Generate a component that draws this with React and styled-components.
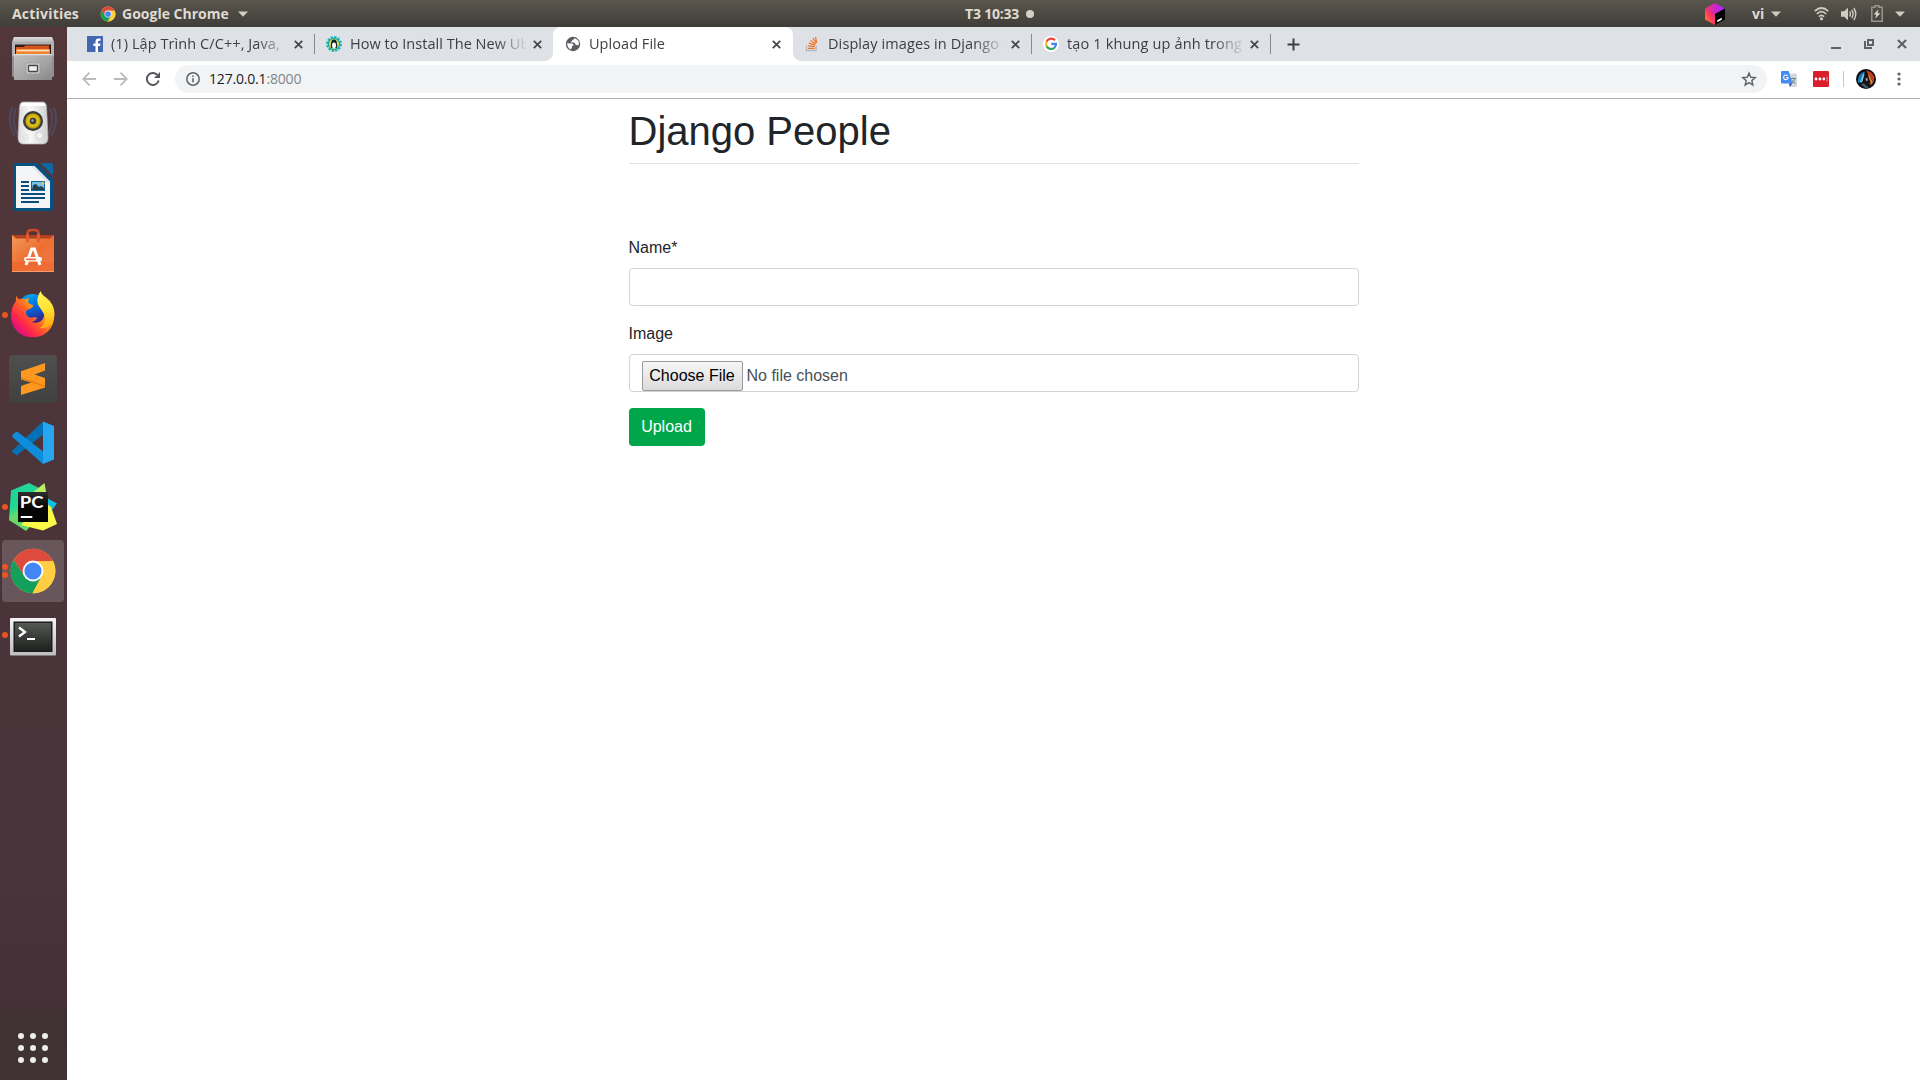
import React from "react";
import styled, { createGlobalStyle } from "styled-components";

const Global = createGlobalStyle`
  *, *::before, *::after { box-sizing: border-box; }
  body { margin: 0; background: #fff; overflow: hidden; }
  svg { display: block; flex: none; }
`;

const uiFont = `"Open Sans", "Noto Sans", sans-serif`;
const pageFont = `"Liberation Sans", Arial, sans-serif`;

const Desktop = styled.div`
  width: 1920px;
  height: 1080px;
  display: flex;
  flex-direction: column;
  overflow: hidden;
  font-family: ${uiFont};
`;

/* ---------- top panel ---------- */
const TopBar = styled.header`
  height: 27px;
  flex: none;
  display: grid;
  grid-template-columns: 965px auto 1fr;
  align-items: center;
  background: linear-gradient(#5a564e, #3f3d38);
  color: #dfdbd2;
  font-size: 14px;
  font-weight: 700;
  line-height: 26px;
`;
const BarLeft = styled.div`
  display: flex;
  align-items: center;
  padding-left: 12px;
`;
const BarCenter = styled.div`
  display: flex;
  align-items: center;
  gap: 4px;
`;
const BarRight = styled.div`
  display: flex;
  align-items: center;
  justify-content: flex-end;
  padding-right: 15px;
`;
const BarText = styled.span`
  width: ${(p) => p.$w}px;
  margin-right: ${(p) => p.$gap || 0}px;
  letter-spacing: ${(p) => p.$ls || 0}px;
  white-space: nowrap;
`;
const Dot = styled.span`
  width: 8px;
  height: 8px;
  border-radius: 50%;
  background: #d3d0c8;
`;
const Spacer = styled.span`
  flex: none;
  width: ${(p) => p.$w}px;
`;

/* ---------- dock ---------- */
const Body = styled.div`
  flex: 1;
  display: flex;
  min-height: 0;
`;
const Dock = styled.nav`
  width: 67px;
  flex: none;
  display: flex;
  flex-direction: column;
  background: linear-gradient(#523639 0%, #4f363a 25%, #4a343a 50%, #48343a 80%, #443036 93%, #3e3233 94%, #3f3334 100%);
`;
const DockItem = styled.div`
  height: 62px;
  width: 62px;
  margin: 1px 0 1px 2px;
  display: flex;
  align-items: center;
  border-radius: 4px;
  background: ${(p) => (p.$active ? "rgba(255,255,255,0.17)" : "transparent")};
`;
const Marks = styled.div`
  width: 7px;
  display: flex;
  flex-direction: column;
  gap: 2px;
`;
const Mark = styled.span`
  width: 6px;
  height: 6px;
  border-radius: 50%;
  background: #e95420;
`;
const AppsButton = styled.div`
  margin: auto 0 17px 18px;
  display: grid;
  grid-template-columns: repeat(3, 6px);
  gap: 6px;
`;
const AppsDot = styled.span`
  height: 6px;
  border-radius: 50%;
  background: #eeeeec;
`;

/* ---------- browser ---------- */
const Browser = styled.main`
  flex: 1;
  min-width: 0;
  display: flex;
  flex-direction: column;
  background: #fff;
`;
const TabStrip = styled.div`
  height: 34px;
  flex: none;
  display: flex;
  padding-left: 8px;
  background: #dee1e6;
`;
const Tab = styled.div`
  position: relative;
  width: ${(p) => (p.$active ? 240 : 239)}px;
  margin-right: ${(p) => (p.$active ? -1 : 0)}px;
  height: 34px;
  display: flex;
  align-items: center;
  padding: 0 0 0 12px;
  border-radius: 8px 8px 0 0;
  background: ${(p) => (p.$active ? "#fff" : "transparent")};
  &::before,
  &::after {
    content: "";
    display: ${(p) => (p.$active ? "block" : "none")};
    position: absolute;
    bottom: 0;
    width: 8px;
    height: 8px;
  }
  &::before {
    left: -8px;
    background: radial-gradient(circle at 0 0, transparent 7.5px, #fff 8.2px);
  }
  &::after {
    right: -8px;
    background: radial-gradient(circle at 100% 0, transparent 7.5px, #fff 8.2px);
  }
`;
const Title = styled.span`
  flex: none;
  width: 176px;
  margin: 0 7px 0 8px;
  white-space: nowrap;
  font-size: 14.5px;
  letter-spacing: ${(p) => p.$ls || 0}px;
  line-height: 34px;
  color: #3c4043;
  -webkit-mask-image: linear-gradient(90deg, #000 146px, transparent 178px);
  mask-image: linear-gradient(90deg, #000 146px, transparent 178px);
`;
const Divider = styled.span`
  width: 1px;
  height: 20px;
  margin: 7px -1px 0 0;
  background: #868b90;
`;
const NewTab = styled.div`
  display: flex;
  align-items: center;
  margin-left: 17px;
`;
const WindowControls = styled.div`
  margin-left: auto;
  padding-right: 13px;
  display: flex;
  align-items: center;
  gap: 23px;
`;
const Toolbar = styled.div`
  height: 38px;
  flex: none;
  display: flex;
  align-items: center;
  padding: 0 14px 2px 12px;
  border-bottom: 1px solid #b3b3b4;
  background: #fff;
`;
const NavButton = styled.div`
  width: 20px;
  margin-right: 12px;
  display: flex;
  justify-content: center;
`;
const Omnibox = styled.div`
  width: 1592px;
  height: 28px;
  border-radius: 14px;
  background: #f1f3f4;
  display: flex;
  align-items: center;
  padding: 0 10px;
`;
const Url = styled.span`
  flex: 1;
  margin-left: 8px;
  font-size: 14px;
  letter-spacing: -0.18px;
  line-height: 28px;
  color: #202124;
`;
const Port = styled.span`
  color: #80868b;
`;
const Extensions = styled.div`
  flex: 1;
  display: flex;
  align-items: center;
  padding-left: 14px;
`;
const ExtDivider = styled.span`
  width: 1px;
  height: 16px;
  margin: 0 12px 0 14px;
  background: #c5c8cc;
`;

/* ---------- page ---------- */
const Page = styled.section`
  flex: 1;
  padding: 8px 0 0;
  font-family: ${pageFont};
  font-size: 16px;
  line-height: 24px;
  color: #212529;
`;
const Container = styled.div`
  width: 730px;
  margin: 0 auto;
`;
const Heading = styled.h1`
  margin: 0 0 72px;
  padding-bottom: 8px;
  border-bottom: 1px solid #e1e3e6;
  font-size: 40px;
  font-weight: 400;
  line-height: 48px;
`;
const Group = styled.div`
  margin-bottom: 16px;
`;
const Label = styled.label`
  display: block;
  margin-bottom: 8px;
`;
const Control = styled.div`
  height: 38px;
  display: flex;
  align-items: flex-start;
  padding: 6px 12px;
  border: 1px solid #ced4da;
  border-radius: 4px;
  color: #495057;
`;
const ChooseButton = styled.span`
  width: 101px;
  height: 30px;
  flex: none;
  margin-right: 4px;
  border: 1px solid #9a9a9a;
  border-radius: 2px;
  background: linear-gradient(#f6f6f6, #dcdcdc);
  color: #000;
  line-height: 28px;
  text-align: center;
`;
const FileText = styled.span`
  line-height: 30px;
`;
const UploadButton = styled.button`
  display: block;
  width: 76px;
  height: 38px;
  padding: 0;
  border: 0;
  border-radius: 4px;
  background: #00a74a;
  color: #fff;
  font: 16px/38px ${pageFont};
  text-align: center;
`;

/* ---------- shared drawings ---------- */
const ChromeLogo = ({ size }) => (
  <svg width={size} height={size} viewBox="0 0 48 48">
    <circle cx="24" cy="24" r="22.3" fill="#fcc934" />
    <path d="M4.7 12.9A22.3 22.3 0 0 1 43.3 12.9L42.8 14H24L15 29Z" fill="#dd4b3e" />
    <path d="M4.7 12.9A22.3 22.3 0 0 0 23.5 46.3L32.7 29 15.3 29Z" fill="#12a05c" />
    <path d="M23.5 46.3A22.3 22.3 0 0 0 44.1 14H24L32.7 29Z" fill="#ffce43" />
    <circle cx="24" cy="24" r="10.4" fill="#fff" />
    <circle cx="24" cy="24" r="8.6" fill="#4286f5" />
  </svg>
);
const Caret = () => (
  <svg width="10" height="6" viewBox="0 0 10 6"><path d="M0 .5h10L5 5.7Z" fill="#cfccc4" /></svg>
);
const Cross = ({ color = "#45494d", size = 9, w = 1.8 }) => (
  <svg width={size} height={size} viewBox="0 0 9 9">
    <path d="M.8.8l7.4 7.4M8.2.8L.8 8.2" stroke={color} strokeWidth={w} />
  </svg>
);

/* ---------- status icons ---------- */
const CubeIcon = () => (
  <svg width="20" height="22" viewBox="0 0 20 22">
    <defs>
      <linearGradient id="cubeL" x1="1" y1="0" x2="0" y2="1">
        <stop offset="0" stopColor="#e0229b" /><stop offset=".5" stopColor="#ff3a5c" /><stop offset="1" stopColor="#ff9419" />
      </linearGradient>
      <linearGradient id="cubeT" x1="0" y1="0" x2="1" y2="0">
        <stop offset="0" stopColor="#ff3366" /><stop offset=".6" stopColor="#c625d8" /><stop offset="1" stopColor="#9b2cff" />
      </linearGradient>
    </defs>
    <path d="M0 5.5L10 0l10 5.5L10 11Z" fill="url(#cubeT)" />
    <path d="M0 5.5L10 11v11L0 16.5Z" fill="url(#cubeL)" />
    <path d="M10 11l10-5.5v11L10 22Z" fill="#000" />
    <path d="M12.2 17.2l4.6-2.5v2l-4.6 2.5Z" fill="#fff" />
  </svg>
);
const WifiIcon = () => (
  <svg width="15" height="15" viewBox="0 0 15 15" fill="none" stroke="#cfccc4" strokeWidth="1.7">
    <path d="M.8 5.2Q7.5-1.2 14.2 5.2" />
    <path d="M2.8 8Q7.5 3.4 12.2 8" />
    <path d="M4.9 10.6Q7.5 8 10.1 10.6" />
    <circle cx="7.5" cy="12.8" r="1.6" fill="#cfccc4" stroke="none" />
  </svg>
);
const VolumeIcon = () => (
  <svg width="16" height="14" viewBox="0 0 16 14">
    <path d="M0 4.3h3.2L7 .8v12.4L3.2 9.7H0Z" fill="#cfccc4" />
    <path d="M8.6 4.5q1.6 2.5 0 5M10.7 2.8q2.8 4.2 0 8.4M12.8 1q4 6 0 12" fill="none" stroke="#cfccc4" strokeWidth="1.4" />
  </svg>
);
const BatteryIcon = () => (
  <svg width="12" height="17" viewBox="0 0 12 17">
    <path d="M4 0.800h4v1.500h3.200v13.900H.8V2.300H4Z" fill="none" stroke="#98958d" strokeWidth="1.500" />
    <path d="M7.600 4.200L2.600 9.600h2.600l-1 4.200 5.200-5.600H6.700Z" fill="#dad7cf" />
  </svg>
);

/* ---------- dock icons ---------- */
const Box = ({ children }) => <svg width="48" height="48" viewBox="0 0 48 48">{children}</svg>;

const FilesIcon = () => (
  <Box>
    <defs>
      <linearGradient id="fil" x1="0" y1="0" x2="1" y2="1">
        <stop offset="0" stopColor="#c2c2c2" /><stop offset=".6" stopColor="#a3a3a3" /><stop offset="1" stopColor="#868686" />
      </linearGradient>
      <linearGradient id="filT" x1="0" y1="0" x2="0" y2="1">
        <stop offset="0" stopColor="#dcdcdc" /><stop offset="1" stopColor="#b8b8b8" />
      </linearGradient>
    </defs>
    <path d="M5 2h38l2 5v34l-1 1H4l-1-1V7Z" fill="#8f8f8f" />
    <path d="M5 2h38l2 5.500H3Z" fill="url(#filT)" />
    <path d="M3 7.500h42v14H3Z" fill="#b4b4b4" />
    <path d="M6 9.500h36V21H6Z" fill="#2f1d1a" />
    <path d="M7 12h8l1-1.500h24V20H7Z" fill="#d5561b" />
    <path d="M7 14h34v6H7Z" fill="#f08533" />
    <path d="M8 14.800h32v1.500H8Z" fill="#ffe3c4" />
    <path d="M5 19h38v26H5Z" fill="url(#fil)" />
    <path d="M5 19h38v1.200H5Z" fill="#e0e0e0" />
    <rect x="17" y="28" width="14" height="11" rx="2" fill="#c9c9c9" stroke="#939393" strokeWidth=".6" />
    <rect x="19.500" y="30.500" width="9" height="6" rx=".8" fill="#f0f0f0" stroke="#474747" strokeWidth="1.300" />
  </Box>
);
const RhythmboxIcon = () => (
  <Box>
    <defs>
      <linearGradient id="rb" x1="0" y1="0" x2="1" y2="0">
        <stop offset="0" stopColor="#dcdcdc" /><stop offset=".4" stopColor="#f8f8f8" /><stop offset="1" stopColor="#d0d0d0" />
      </linearGradient>
      <radialGradient id="rbc"><stop offset="0" stopColor="#bd9b00" /><stop offset=".7" stopColor="#e0c01b" /><stop offset="1" stopColor="#a38700" /></radialGradient>
    </defs>
    <g fill="none" stroke="#56648f" strokeWidth="2" opacity=".4">
      <path d="M7 9q-5 12 1 26M3.500 8q-6 13 2 29M41 9q5 12-1 26M44.500 8q6 13-2 29" />
    </g>
    <path d="M14 3h20q3 0 3.500 5L39 38q.3 7-5 7H14q-5 0-5-7L10.500 8Q11 3 14 3Z" fill="url(#rb)" stroke="#b5b5b5" strokeWidth=".7" />
    <path d="M14 4h20q2 0 2.500 3h-25Q12 4 14 4Z" fill="#fff" />
    <circle cx="24" cy="22" r="10" fill="#3a3b3c" />
    <circle cx="24" cy="22" r="7.800" fill="url(#rbc)" />
    <circle cx="24" cy="22" r="3.200" fill="#3b3d40" />
    <circle cx="23.500" cy="21.500" r="1.200" fill="#a2a6a8" />
    <circle cx="30.500" cy="36.500" r="3.600" fill="#f4f4f4" stroke="#cfcfcf" />
    <path d="M14 36h5v4h-5Z" fill="none" stroke="#dedede" />
  </Box>
);
const WriterIcon = () => (
  <Box>
    <path d="M6 0h22l16 16v30q0 2-2 2H6q-2 0-2-2V2q0-2 2-2Z" fill="#06517f" />
    <path d="M7 3h18.500L41 18.500V45H7Z" fill="#f4f5f6" />
    <path d="M25.500 3L41 18.500V22L22 3Z" fill="#d4dade" opacity=".6" />
    <path d="M31.500 0H42q2 0 2 2v10.500Z" fill="#0b68a5" />
    <g fill="#0a4d7a">
      <path d="M12 18h8v2h-8ZM12 22h8v2h-8ZM12 26h8v2h-8ZM12 30h24v2H12ZM12 34h24v2H12ZM12 38h18v2H12Z" />
    </g>
    <path d="M22 18h14v10H22Z" fill="#0b68a5" />
    <path d="M23 19h12v8H23Z" fill="#7cc2e8" />
    <path d="M23 27l1-5 3-1 3 3 2-1 3 2v2Z" fill="#23404f" />
    <circle cx="33.800" cy="20.200" r="1.600" fill="#d8c352" />
  </Box>
);
const SoftwareIcon = () => (
  <Box>
    <defs>
      <linearGradient id="sw" x1="0" y1="0" x2="1" y2="1">
        <stop offset="0" stopColor="#f0995a" /><stop offset=".5" stopColor="#ee6f33" /><stop offset="1" stopColor="#f07a4a" />
      </linearGradient>
    </defs>
    <path d="M3 8h42v8H3Z" fill="#b4411f" />
    <path d="M18.500 14V7q0-4 4-4h3q4 0 4 4v7" fill="none" stroke="#cf4a20" strokeWidth="2.600" />
    <path d="M3 8l4 3.500h34L45 8v37H3Z" fill="url(#sw)" />
    <path d="M3 35h42v9H3Z" fill="#f0662b" opacity=".6" />
    <path d="M3 44h42v1H3Z" fill="#ff9d70" />
    <path d="M18.500 8v6M29.500 8v6" stroke="#e15d30" strokeWidth="3" strokeLinecap="round" />
    <path d="M17 38l5.700-16h2.600l5.700 16" fill="none" stroke="#fff" strokeWidth="3" />
    <rect x="15" y="30" width="18" height="4.500" rx="2.200" fill="#fff" />
    <rect x="17" y="31.400" width="10" height="1.800" rx=".9" fill="#ee6f33" />
  </Box>
);
const FirefoxIcon = () => (
  <Box>
    <defs>
      <linearGradient id="ffo" x1=".85" y1=".15" x2=".15" y2=".8">
        <stop offset="0" stopColor="#ffe03a" /><stop offset=".25" stopColor="#ffb31a" /><stop offset=".5" stopColor="#ff6a24" /><stop offset=".8" stopColor="#ff2848" /><stop offset="1" stopColor="#e4127c" />
      </linearGradient>
      <linearGradient id="ffb" x1=".3" y1="0" x2=".6" y2="1">
        <stop offset="0" stopColor="#00a9f2" /><stop offset=".5" stopColor="#0565d8" /><stop offset="1" stopColor="#3a1a80" />
      </linearGradient>
      <linearGradient id="ffy" x1=".5" y1="0" x2=".6" y2="1">
        <stop offset="0" stopColor="#fff45c" /><stop offset=".5" stopColor="#ffe130" /><stop offset="1" stopColor="#ffa414" />
      </linearGradient>
    </defs>
    <circle cx="23.500" cy="18" r="15" fill="url(#ffb)" />
    <path d="M7.700 4.800Q8.200 7 9.700 8.300 13 7 16.500 8.300 18 7.300 20 7.200 18.700 10 19.500 12 21.500 13.700 24 14 24.300 17 20 18.200 17.800 19 17 20 16.200 23 18.500 25.500 22 27.500 25 26.300 27.500 26 28 27.500 26.500 30 22.500 31 29 33.500 33.500 28.500 37 23.500 34 17L43.500 17Q47.500 28 41.500 37.500 35 46.300 24 46.300 11 46.300 4.800 36 .3 27 3.300 16.500 5 12.500 6.800 10.500 6.500 7 7.700 4.800Z" fill="url(#ffo)" />
    <path d="M31.700 0q.8 3.800 5.300 6.500 8 6 8.500 16 .2 6-3.500 11-4.500 4.500-11 3.500 6-4 5-11-1-4-4.500-8.500Q27.500 13 28.500 7.500 29.200 3 31.700 0Z" fill="url(#ffy)" />
  </Box>
);
const SublimeIcon = () => (
  <Box>
    <defs><linearGradient id="sub" x1="0" y1="0" x2="0" y2="1"><stop offset="0" stopColor="#4f4f4f" /><stop offset="1" stopColor="#414141" /></linearGradient></defs>
    <rect width="48" height="48" rx="3" fill="url(#sub)" />
    <path d="M12 16.300L36 8v7.600L25.500 19.500 36 23v8.500L12 24.500Z" fill="#ff9820" />
    <path d="M12 31l13-4.500 11 4.500v1.500L12 40Z" fill="#ff9820" />
    <path d="M25 26.500L12 22.500v2l11.500 3.200 12.500 4.500V31Z" fill="#e67f12" />
  </Box>
);
const VSCodeIcon = () => (
  <Box>
    <path d="M34 2.500L5.500 29.500Q3 31 3 32.500L7.500 36.500 34 15.500Z" fill="#0471b6" />
    <path d="M34 45L4 18.500Q2.500 17 3.500 15.800L7 13Q8 12.500 9.500 13.500L34 32.500Z" fill="#0d8ddb" />
    <path d="M34 2.500l11 4.600v33.300L34 45Z" fill="#27a5ee" />
  </Box>
);
const PyCharmIcon = () => (
  <Box>
    <defs>
      <linearGradient id="pcg" x1="0" y1="0" x2=".3" y2="1"><stop offset="0" stopColor="#1fd4a0" /><stop offset=".5" stopColor="#22d88f" /><stop offset="1" stopColor="#a8e655" /></linearGradient>
      <linearGradient id="pcb" x1="0" y1="0" x2="0" y2="1"><stop offset="0" stopColor="#2e2e2e" /><stop offset=".5" stopColor="#050505" /></linearGradient>
    </defs>
    <path d="M36 14l12 6.500-7 9-14-4Z" fill="#0fbfe6" />
    <path d="M2 7.500L20 0l12 6L38 22 18 47 0 37Z" fill="url(#pcg)" />
    <path d="M22 11L35.500 0 38 14Z" fill="#b5ee63" />
    <path d="M0 37l9-10 14 13-6 8Z" fill="#66da68" />
    <path d="M37 20l5 4 6 17-14 6.500L12 42l10-11Z" fill="#fcf84a" />
    <path d="M9 9h30v30H9Z" fill="url(#pcb)" />
    <path d="M11.800 33h11.500v2H11.800Z" fill="#fff" />
    <text x="10.800" y="25" fill="#fff" fontFamily="Lato, sans-serif" fontWeight="700" fontSize="17" textLength="23.800" lengthAdjust="spacingAndGlyphs">PC</text>
  </Box>
);
const TerminalIcon = () => (
  <Box>
    <defs>
      <linearGradient id="tm" x1="0" y1="0" x2="0" y2="1"><stop offset="0" stopColor="#565856" /><stop offset=".5" stopColor="#3a3c3a" /><stop offset="1" stopColor="#1f211f" /></linearGradient>
      <linearGradient id="tf" x1="0" y1="0" x2="0" y2="1"><stop offset="0" stopColor="#f4f4f4" /><stop offset="1" stopColor="#bdbdbd" /></linearGradient>
    </defs>
    <rect x="1" y="7" width="46" height="37.500" rx="1" fill="url(#tf)" />
    <rect x="4.500" y="10.500" width="39" height="30.500" fill="#1c1d1c" />
    <rect x="6" y="12" width="36" height="27.500" fill="url(#tm)" />
    <path d="M10 16.500l6 4.500-6 4.500" fill="none" stroke="#fff" strokeWidth="2.300" />
    <path d="M18 27h8v2h-8Z" fill="#fff" />
  </Box>
);

/* ---------- favicons ---------- */
const Facebook = () => (
  <svg width="16" height="16" viewBox="0 0 16 16">
    <rect width="16" height="16" rx=".6" fill="#4267b2" />
    <path d="M11 16V9.900h2.100l.4-2.400H11V6q0-1.200 1.300-1.200h1.300V2.600q-1-.1-2-.1-3.100 0-3.100 3.100v1.900H6.400v2.400h2.100V16Z" fill="#fff" />
  </svg>
);
const Penguin = () => (
  <svg width="16" height="16" viewBox="0 0 16 16">
    <circle cx="8" cy="8" r="6.900" fill="none" stroke="#10b5ac" strokeWidth="2" strokeDasharray="2.300 1.310" />
    <circle cx="8" cy="8" r="6.200" fill="#12aaa2" />
    <circle cx="8" cy="8" r="5" fill="#e6d65a" />
    <path d="M8 3.600q2.600 0 2.900 3.400.8 3-.2 5H5.300q-1-2-.2-5Q5.400 3.600 8 3.600Z" fill="#12262b" />
    <ellipse cx="8" cy="9.300" rx="2" ry="2.900" fill="#fff" />
  </svg>
);
const Globe = () => (
  <svg width="16" height="16" viewBox="0 0 16 16">
    <circle cx="8" cy="8" r="7.200" fill="#5a5e63" />
    <path d="M2.100 7.300l5.100.2q1.500.6 1.300 2.200H7v1.700q-.8 1.200-1.300 2.100Q2.200 11.800 2.100 7.300ZM9.400 2.200q-.4 1.700-1.900 1.700-.4 1.700-1.800 2 1 .9 2.700.6 2.200.2 2.300 2.500h1.600q1 .2 1.200.8 1.100-2.300-.1-4.700-1.400-2.300-4-2.900Z" fill="#fff" />
  </svg>
);
const StackOverflow = () => (
  <svg width="16" height="16" viewBox="0 0 16 16">
    <path d="M2.500 9.500v5h9.600v-5" fill="none" stroke="#b5b8bb" strokeWidth="1.300" />
    <path d="M4 12.300h6.600M4.100 9.800l6.500.8M4.900 7.100l6.100 2M6.400 4.400l5.200 3.700M8.800 2.100l3.700 5M11.500.8l1.200 6" stroke="#f4712a" strokeWidth="1.200" />
  </svg>
);
const Google = () => (
  <svg width="16" height="16" viewBox="0 0 16 16">
    <circle cx="8" cy="8" r="8" fill="#fff" />
    <g fill="none" strokeWidth="2.200">
      <path d="M12 4.300A5 5 0 0 0 3.600 5.700" stroke="#ea4335" />
      <path d="M3.600 5.700A5 5 0 0 0 3.600 10.300" stroke="#fbbc05" />
      <path d="M3.600 10.300A5 5 0 0 0 11.300 11.800" stroke="#34a853" />
      <path d="M11.300 11.800A5 5 0 0 0 13 7.900H8.200" stroke="#4285f4" />
    </g>
  </svg>
);

/* ---------- extension icons ---------- */
const TranslateIcon = () => (
  <svg width="16" height="16" viewBox="0 0 16 16">
    <path d="M6 2.500h9q1 0 1 1V15q0 1-1 1H9Z" fill="#d5d8dc" />
    <path d="M9.500 7.500h5.500M12.200 6.500v1M14 7.700q-.8 3.300-3.600 4.800M10.600 8.500q1 3 4 4" stroke="#6b8a96" strokeWidth="1" fill="none" />
    <path d="M1 0h6.700l3.700 12.500H1q-1 0-1-1V1q0-1 1-1Z" fill="#448af4" />
    <path d="M8 12.500h3.400L8.800 16Z" fill="#2b57b8" />
    <path d="M6.700 4.900A2.300 2.300 0 1 0 7.200 6.500H5.200" fill="none" stroke="#fff" strokeWidth="1.100" />
  </svg>
);
const LastPassIcon = () => (
  <svg width="16" height="16" viewBox="0 0 16 16">
    <rect width="16" height="16" rx="1.200" fill="#da1f2c" />
    <circle cx="3" cy="8" r="1.400" fill="#fff" /><circle cx="6.900" cy="8" r="1.400" fill="#fff" /><circle cx="10.800" cy="8" r="1.400" fill="#fff" />
    <path d="M14 5.500v5" stroke="#f0a0a5" strokeWidth=".9" />
  </svg>
);
const Avatar = () => (
  <svg width="20" height="20" viewBox="0 0 20 20">
    <defs><clipPath id="av"><circle cx="10" cy="10" r="10" /></clipPath></defs>
    <g clipPath="url(#av)">
      <rect width="20" height="20" fill="#0b0c10" />
      <path d="M2 10Q3 4 9 2.500L8 6 6 13l-4 1Z" fill="#1f7cae" />
      <path d="M4 13L7.500 4.500l1 1L6 13.500Z" fill="#7cc8e4" />
      <path d="M10 1.500q6 .5 8.500 7l-1 5-4-6Z" fill="#c6401c" />
      <path d="M12 4.500l5 9-1.500 2-3-7Z" fill="#f08a3c" />
      <path d="M8.500 6Q11 3.500 12.500 8l2.500 7-4 4-3.500-5Z" fill="#17161b" />
      <path d="M9.500 9.500l2-.5.300 2.500-1.800.500Z" fill="#b7a296" />
      <path d="M5 15.500q3-2.500 5 1.500l3 1-3 1.500Z" fill="#3c6478" />
      <path d="M13.500 13l2.500 1.500-1.500 1.800Z" fill="#d9622c" />
    </g>
  </svg>
);

const dockItems = [
  { Icon: FilesIcon, marks: 0 },
  { Icon: RhythmboxIcon, marks: 0 },
  { Icon: WriterIcon, marks: 0 },
  { Icon: SoftwareIcon, marks: 0 },
  { Icon: FirefoxIcon, marks: 1 },
  { Icon: SublimeIcon, marks: 0 },
  { Icon: VSCodeIcon, marks: 0 },
  { Icon: PyCharmIcon, marks: 1 },
  { Icon: () => <ChromeLogo size={48} />, marks: 2, active: true },
  { Icon: TerminalIcon, marks: 1 },
];

const tabs = [
  { Icon: Facebook, title: "(1) Lập Trình C/C++, Java,", ls: 0.08, divider: true },
  { Icon: Penguin, title: "How to Install The New Ub", ls: 0.03 },
  { Icon: Globe, title: "Upload File", ls: 0.05, active: true },
  { Icon: StackOverflow, title: "Display images in Django -", ls: 0.1, divider: true },
  { Icon: Google, title: "tạo 1 khung up ảnh trong", ls: 0.15, divider: true },
];

export default function App() {
  return (
    <Desktop>
      <Global />
      <TopBar>
        <BarLeft>
          <BarText $w={68} $gap={20} $ls={0.2}>Activities</BarText>
          <ChromeLogo size={16} />
          <Spacer $w={6} />
          <BarText $w={111} $gap={5}>Google Chrome</BarText>
          <Caret />
        </BarLeft>
        <BarCenter>
          <BarText $w={57} $ls={-0.2}>T3 10:33</BarText>
          <Dot />
        </BarCenter>
        <BarRight>
          <CubeIcon />
          <Spacer $w={27} />
          <BarText $w={12} $gap={7}>vi</BarText>
          <Caret />
          <Spacer $w={33} />
          <WifiIcon />
          <Spacer $w={12} />
          <VolumeIcon />
          <Spacer $w={14} />
          <BatteryIcon />
          <Spacer $w={12} />
          <Caret />
        </BarRight>
      </TopBar>
      <Body>
        <Dock>
          {dockItems.map(({ Icon, marks, active }, i) => (
            <DockItem key={i} $active={active}>
              <Marks>
                {Array.from({ length: marks }, (_, m) => <Mark key={m} />)}
              </Marks>
              <Icon />
            </DockItem>
          ))}
          <AppsButton>
            {Array.from({ length: 9 }, (_, i) => <AppsDot key={i} />)}
          </AppsButton>
        </Dock>
        <Browser>
          <TabStrip>
            {tabs.map(({ Icon, title, ls, active, divider }) => (
              <React.Fragment key={title}>
                <Tab $active={active}>
                  <Icon />
                  <Title $ls={ls}>{title}</Title>
                  <Cross />
                </Tab>
                {divider && <Divider />}
              </React.Fragment>
            ))}
            <NewTab>
              <svg width="13" height="13" viewBox="0 0 13 13"><path d="M6.500.5v12M.5 6.500h12" stroke="#3c4043" strokeWidth="2" /></svg>
            </NewTab>
            <WindowControls>
              <svg width="10" height="10" viewBox="0 0 10 10"><path d="M0 8h10v2H0Z" fill="#5f6368" /></svg>
              <svg width="10" height="10" viewBox="0 0 10 10"><path d="M4 1h5v5H4ZM1 2v7h7" fill="none" stroke="#5f6368" strokeWidth="2" /></svg>
              <Cross color="#5f6368" size={10} w={1.9} />
            </WindowControls>
          </TabStrip>
          <Toolbar>
            <NavButton>
              <svg width="14" height="14" viewBox="0 0 14 14"><path d="M14 7H1.500M7.500.7L1.200 7l6.300 6.300" fill="none" stroke="#b9bcbf" strokeWidth="1.800" /></svg>
            </NavButton>
            <NavButton>
              <svg width="14" height="14" viewBox="0 0 14 14"><path d="M0 7h12.500M6.500.7L12.800 7l-6.300 6.300" fill="none" stroke="#b9bcbf" strokeWidth="1.800" /></svg>
            </NavButton>
            <NavButton>
              <svg width="14" height="14" viewBox="0 0 14 14"><path d="M12.700 8.500A6 6 0 1 1 11.200 2.800" fill="none" stroke="#54585d" strokeWidth="2" /><path d="M14 0v6H8Z" fill="#54585d" /></svg>
            </NavButton>
            <Omnibox>
              <svg width="16" height="16" viewBox="0 0 16 16"><circle cx="8" cy="8" r="6.200" fill="none" stroke="#5f6368" strokeWidth="1.500" /><path d="M7.200 7.200h1.600v4H7.200ZM7.200 4.500h1.600v1.600H7.200Z" fill="#5f6368" /></svg>
              <Url>127.0.0.1<Port>:8000</Port></Url>
              <svg width="16" height="16" viewBox="0 0 24 24"><path d="M12 3.200l2.600 6.200 6.700.6-5.100 4.400 1.600 6.600L12 17.500 6.200 21l1.600-6.600L2.700 10l6.700-.6Z" fill="none" stroke="#5f6368" strokeWidth="2.100" /></svg>
            </Omnibox>
            <Extensions>
              <TranslateIcon />
              <Spacer $w={16} />
              <LastPassIcon />
              <ExtDivider />
              <Avatar />
              <Spacer $w={20.5} />
              <svg width="4" height="14" viewBox="0 0 4 14" fill="#5f6368"><circle cx="2" cy="2" r="1.600" /><circle cx="2" cy="7" r="1.600" /><circle cx="2" cy="12" r="1.600" /></svg>
            </Extensions>
          </Toolbar>
          <Page>
            <Container>
              <Heading>Django People</Heading>
              <Group>
                <Label>Name*</Label>
                <Control />
              </Group>
              <Group>
                <Label>Image</Label>
                <Control>
                  <ChooseButton>Choose File</ChooseButton>
                  <FileText>No file chosen</FileText>
                </Control>
              </Group>
              <UploadButton>Upload</UploadButton>
            </Container>
          </Page>
        </Browser>
      </Body>
    </Desktop>
  );
}
